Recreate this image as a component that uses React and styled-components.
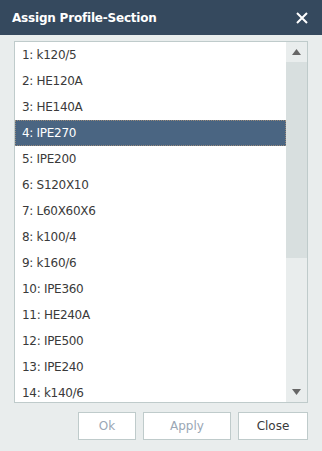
import styled, { createGlobalStyle } from "styled-components";

const items = [
  "1: k120/5",
  "2: HE120A",
  "3: HE140A",
  "4: IPE270",
  "5: IPE200",
  "6: S120X10",
  "7: L60X60X6",
  "8: k100/4",
  "9: k160/6",
  "10: IPE360",
  "11: HE240A",
  "12: IPE500",
  "13: IPE240",
  "14: k140/6",
];

const App = () => {
  return (
    <>
      <Global />
      <Dialog>
        <Header>
          <Title>Assign Profile-Section</Title>
          <CloseX>
            <svg width="12" height="12" viewBox="0 0 12 12">
              <path d="M1 1L11 11M11 1L1 11" stroke="#fff" strokeWidth="2" />
            </svg>
          </CloseX>
        </Header>
        <Body>
          <ListBox>
            <Rows>
              {items.map((it, i) => (
                <Row key={it} selected={i === 3}>
                  {it}
                </Row>
              ))}
            </Rows>
            <ScrollBar>
              <Arrow>
                <svg width="9" height="6" viewBox="0 0 9 6">
                  <path d="M0 6L4.5 0L9 6Z" fill="#666" />
                </svg>
              </Arrow>
              <Thumb />
              <Track />
              <Arrow>
                <svg width="9" height="6" viewBox="0 0 9 6">
                  <path d="M0 0L4.5 6L9 0Z" fill="#666" />
                </svg>
              </Arrow>
            </ScrollBar>
          </ListBox>
          <Footer>
            <Button width={58} disabled>
              Ok
            </Button>
            <Button width={88} disabled>
              Apply
            </Button>
            <Button width={70}>Close</Button>
          </Footer>
        </Body>
      </Dialog>
    </>
  );
};

export default App;

const Global = createGlobalStyle`
  html, body {
    margin: 0;
    padding: 0;
    background: #e9eded;
  }
  * {
    box-sizing: border-box;
  }
`;

const Dialog = styled.div`
  width: 322px;
  height: 451px;
  display: flex;
  flex-direction: column;
  background-color: #e9eded;
  font-family: Tahoma, "DejaVu Sans", sans-serif;
`;

const Header = styled.div`
  height: 35px;
  background-color: #35495e;
  display: flex;
  align-items: center;
  justify-content: space-between;
  padding: 0 14px 0 12px;
`;

const Title = styled.span`
  color: #fff;
  font-family: "DejaVu Sans", sans-serif;
  font-weight: 700;
  font-size: 12px;
  letter-spacing: -0.2px;
`;

const CloseX = styled.span`
  display: flex;
`;

const Body = styled.div`
  flex: 1;
  padding: 6px 14px 0 14px;
  display: flex;
  flex-direction: column;
`;

const ListBox = styled.div`
  height: 362px;
  border: 1px solid #bfcbcb;
  background: #fff;
  display: flex;
  overflow: hidden;
`;

const Rows = styled.div`
  flex: 1;
  overflow: hidden;
`;

const Row = styled.div`
  height: 26px;
  display: flex;
  align-items: center;
  padding-left: 6px;
  font-family: "DejaVu Sans", sans-serif;
  font-size: 12px;
  letter-spacing: -0.3px;
  color: ${(props) => (props.selected ? "#fff" : "#3a3a3a")};
  background-color: ${(props) => (props.selected ? "#4a6582" : "#fff")};
  border: 1px dotted ${(props) => (props.selected ? "#9a8a7a" : "transparent")};
`;

const ScrollBar = styled.div`
  width: 21px;
  display: flex;
  flex-direction: column;
  background: #e9eded;
`;

const Arrow = styled.div`
  height: 20px;
  display: flex;
  align-items: center;
  justify-content: center;
`;

const Thumb = styled.div`
  height: 196px;
  background: #d8dfdf;
`;

const Track = styled.div`
  flex: 1;
`;

const Footer = styled.div`
  display: flex;
  justify-content: flex-end;
  gap: 7px;
  padding-top: 9px;
`;

const Button = styled.button`
  width: ${(props) => props.width}px;
  height: 28px;
  background: #fff;
  border: 1px solid #bfcbcb;
  font-family: "DejaVu Sans", sans-serif;
  font-size: 12px;
  color: ${(props) => (props.disabled ? "#9aa7b5" : "#3a3a3a")};
  padding: 0;
`;
